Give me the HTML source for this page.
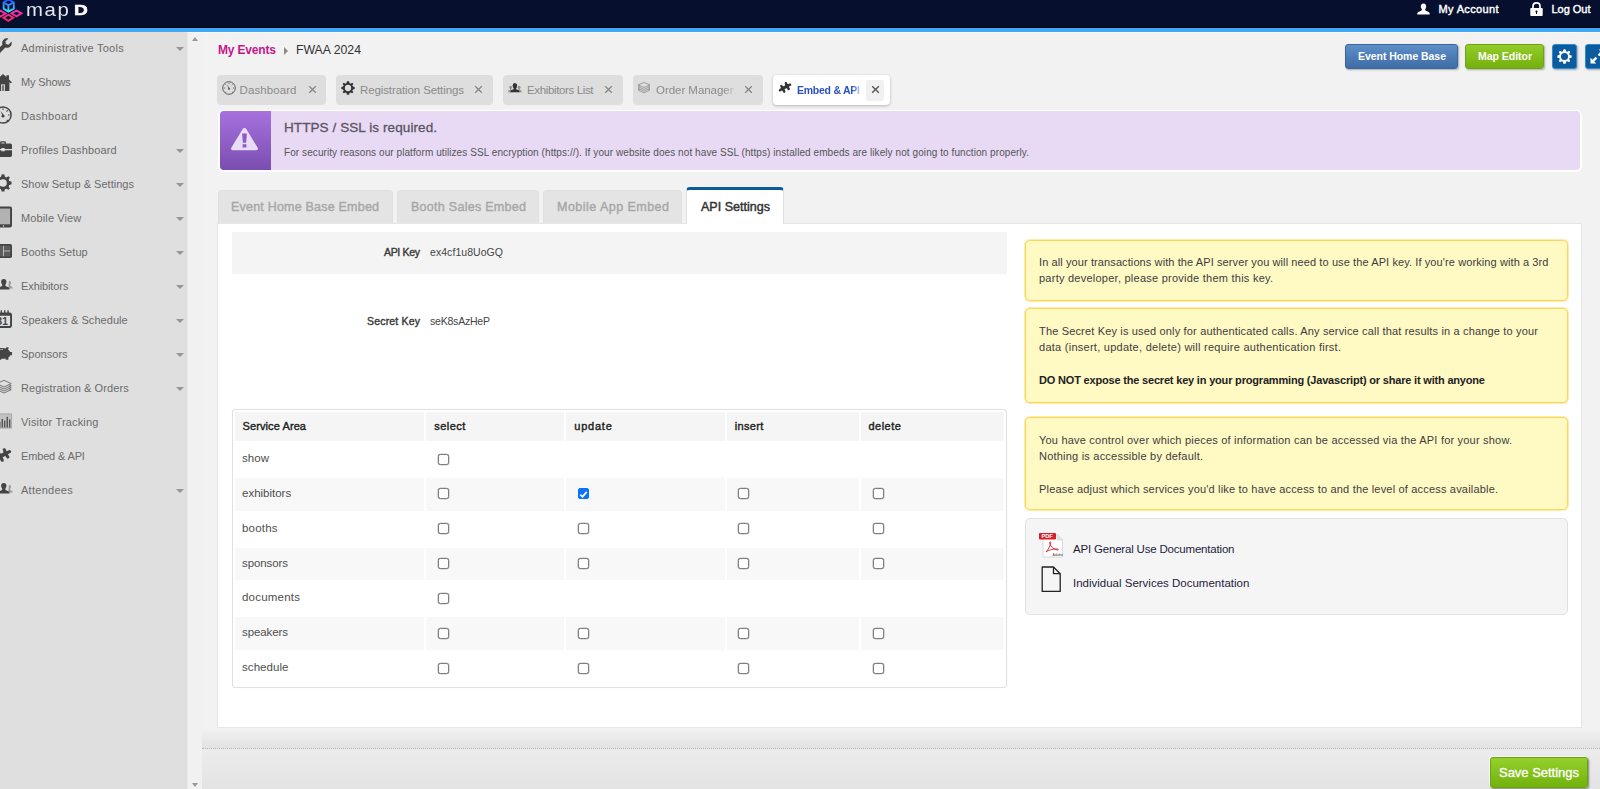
<!DOCTYPE html>
<html lang="en">
<head>
<meta charset="utf-8">
<title>map D - Embed &amp; API</title>
<style>
*{box-sizing:border-box;margin:0;padding:0}
html,body{width:1600px;height:789px;overflow:hidden}
body{position:relative;background:#f2f2f2;font-family:"Liberation Sans",sans-serif;font-size:11.5px;color:#555;-webkit-font-smoothing:antialiased}
.abs{position:absolute}
.t{position:absolute;white-space:nowrap;line-height:1}
/* top bar */
#topbar{position:absolute;left:0;top:0;width:1600px;height:27px;background:#060f2e}
#topline0{position:absolute;left:0;top:27px;width:1600px;height:1px;background:#01030c}
#topline{position:absolute;left:0;top:28px;width:1600px;height:3.7px;background:#3fa9f5}
#topline2{position:absolute;left:0;top:32px;width:1600px;height:1px;background:linear-gradient(90deg,#ecdcd2 187px,#fbfbfb 188px)}
/* sidebar */
#sidebar{position:absolute;left:0;top:33px;width:187px;height:756px;background:#dfdfdf;border-right:1px solid #e9e9e9;box-sizing:content-box}
#sbscroll{position:absolute;left:188px;top:33px;width:15px;height:757px;background:#f1f1f1}
.mi{position:absolute;left:21px;font-size:11px;color:#6b6b6b;white-space:nowrap;line-height:14px}
.arr{position:absolute;left:175.5px;width:0;height:0;border-left:4.7px solid transparent;border-right:4.7px solid transparent;border-top:4.7px solid #969696}
.ico{position:absolute;left:0;overflow:visible}
/* top tabs */
.tab{position:absolute;top:75px;height:30px;background:#dedede;border-radius:4px}
.tab .lbl{position:absolute;top:9px;font-size:11.5px;color:#8a8a8a;white-space:nowrap;line-height:13px}
.tab .x{position:absolute;top:10px;width:9px;height:9px}
.tab.on{background:#fff;box-shadow:0 1px 3px rgba(0,0,0,.25)}
/* sub tabs */
.stab{position:absolute;top:189.6px;height:34.4px;background:#e4e4e4;border-radius:4px 4px 0 0;border:1px solid #e0e0e0;border-bottom:none}
.stab span{position:absolute;top:9px;font-size:12.5px;color:#a7a7a7;white-space:nowrap;line-height:14px;-webkit-text-stroke:.4px #a7a7a7}
/* notes */
.note{position:absolute;left:1025px;width:543px;background:#fff9c4;border:1px solid #fad75c;border-radius:5px;box-shadow:0 0 0 1px rgba(252,222,110,.6);color:#444;font-size:11px}
.note .t{color:#3d3d3d;font-size:11px}
/* table */
.th{position:absolute;top:412px;height:29.4px;background:#f5f5f5}
.th span{position:absolute;left:8px;top:8px;font-size:11px;-webkit-text-stroke:.4px #222;color:#222;line-height:13px;white-space:nowrap}
.row{position:absolute;left:234px;width:769px;height:33px}
.row.alt i{position:absolute;top:0;height:33px;background:#f9f9f9}
.rl{position:absolute;left:242px;font-size:11.5px;color:#4e4e4e;line-height:13px;white-space:nowrap}
.cb{position:absolute;width:11px;height:11px;border:1px solid #7d7d7d;border-radius:2.5px;background:#fff;box-shadow:0 0 0 .3px #8a8a8a}
.cb.on{background:#0b72fa;border-color:#0b72fa;box-shadow:none;border-radius:2px}
</style>
</head>
<body>
<!-- TOP BAR -->
<div id="topbar"></div><div id="topline0"></div><div id="topline"></div><div id="topline2"></div>
<svg class="abs" style="left:0;top:0" width="26" height="26" viewBox="0 0 26 26">
<defs><linearGradient id="gc" gradientUnits="userSpaceOnUse" x1="0" y1="0" x2="0" y2="12"><stop offset="0" stop-color="#2a4ff5"/><stop offset="0.5" stop-color="#35a0f8"/><stop offset="1" stop-color="#35f0e4"/></linearGradient>
<linearGradient id="gp" gradientUnits="userSpaceOnUse" x1="0" y1="10" x2="0" y2="21"><stop offset="0" stop-color="#f530c8"/><stop offset="1" stop-color="#f52a4e"/></linearGradient></defs>
<g fill="none" stroke="url(#gp)" stroke-width="1.9" stroke-linejoin="miter"><path d="M0.3 10.6 5.6 13.6 0.3 16.600001 -5 13.6Z"/><path d="M16.5 10.6 21.5 13.4 16.5 16.400001 11.4 13.4Z"/><path d="M8.4 14.8 13.3 17.7 8.4 20.8 3.500001 17.7Z"/></g>
<g fill="none" stroke="url(#gc)" stroke-width="1.9" stroke-linejoin="round"><path d="M8.4 -0.6 13.8 2.4V8.6L8.4 11.6 3.6 8.6V2.4Z"/><path d="M3.6 2.4 8.4 5.2 13.8 2.4M8.4 5.2V11.6"/></g>
</svg>
<div class="t" style="left:26px;top:0.7px;font-size:18.5px;color:#e4e6ee;letter-spacing:1.5px;transform:scaleX(1.1);transform-origin:0 0">map</div>
<div class="t" style="left:74.3px;top:3.3px;font-size:14.4px;font-weight:bold;color:#fff;-webkit-text-stroke:.5px #fff;transform:scaleX(1.33);transform-origin:0 0">D</div>

<svg class="abs" style="left:1417px;top:3px" width="13" height="12" viewBox="0 0 13 12"><path d="M6.5 0.5C8.4 0.5 9.2 1.9 9.2 3.4 9.2 4.9 8.3 5.7 8.100001 6.6 7.9 7.5 8.9 7.9 10.6 8.5 12.2 9.1 12.8 9.8 12.8 11.6H0.2C0.2 9.8 0.8 9.1 2.4 8.5 4.1 7.9 5.1 7.5 4.9 6.6 4.7 5.7 3.8 4.9 3.8 3.4 3.8 1.9 4.6 0.5 6.5 0.5Z" fill="#fff"/></svg>
<div class="t" style="letter-spacing:0.349px;left:1438.5px;top:3.5px;font-size:11px;color:#fff;-webkit-text-stroke:.4px #fff">My Account</div>
<svg class="abs" style="left:1530px;top:2px" width="13" height="14" viewBox="0 0 13 14"><path d="M3 6.500001V4.2C3 2.2 4.500001 0.9 6.500001 0.9 8.500001 0.9 10 2.2 10 4.2V6.500001" fill="none" stroke="#fff" stroke-width="1.7"/><rect x="0.3" y="6" width="12.4" height="8" rx="0.8" fill="#fff"/><path d="M6.5 8.6A1 1 0 0 1 7 10.5V12H6V10.5A1 1 0 0 1 6.5 8.600001Z" fill="#060f2e"/></svg>
<div class="t" style="letter-spacing:-0.023px;left:1551.5px;top:3.7px;font-size:11px;color:#fff;-webkit-text-stroke:.4px #fff">Log Out</div>

<!-- SIDEBAR -->
<div id="sidebar"></div><div id="sbscroll"></div>
<!--SIDEBAR-ITEMS-->
<svg class="ico" style="left:-6px;top:37.7px" width="18" height="18" viewBox="0 0 16 16"><path d="M15.6 3.2 12.9 5.9 10.6 5.4 10.1 3.1 12.8 0.4C11.3 0 9.6 0.4 8.5 1.5 7.3 2.7 7 4.4 7.5 5.9L0.9 12.5C0.2 13.2 0.2 14.4 0.9 15.1 1.6 15.8 2.8 15.8 3.5 15.1L10.1 8.5C11.6 9 13.3 8.7 14.5 7.5 15.6 6.4 16 4.7 15.6 3.2Z" fill="#444"/></svg>
<div class="mi" style="letter-spacing:0.267px;top:41.4px">Administrative Tools</div>
<div class="arr" style="top:46.6px"></div>
<svg class="ico" style="left:-6px;top:71.7px" width="18" height="18" viewBox="0 0 16 16"><g transform="translate(0 0.8)"><path d="M8 1 0 8.2 1 9.3 2.3 8.2V16H13.7V8.2L15 9.3 16 8.2 13.3 5.8V2H11V3.7Z" fill="#444"/><rect x="6.2" y="10.2" width="3.6" height="5.8" fill="#d8d8d8"/><rect x="7" y="11" width="2" height="5" fill="#777"/></g></svg>
<div class="mi" style="letter-spacing:-0.150px;top:75.4px">My Shows</div>
<svg class="ico" style="left:-6px;top:105.7px" width="18" height="18" viewBox="0 0 16 16"><circle cx="8" cy="8" r="7.2" fill="none" stroke="#444" stroke-width="1.3"/><path d="M8 9.5 5.6 4.2 9.3 8.6Z" fill="#444"/><circle cx="8" cy="9" r="1.3" fill="#444"/><g stroke="#444" stroke-width="1"><path d="M8 2.2V3.6M3.9 3.9 4.9 4.9M12.1 3.9 11.1 4.9M2.2 8H3.6M13.8 8H12.4M11.3 12.5 13 13.5M4.7 12.5 3 13.5"/></g></svg>
<div class="mi" style="letter-spacing:0.334px;top:109.4px">Dashboard</div>
<svg class="ico" style="left:-6px;top:139.7px" width="18" height="18" viewBox="0 0 16 16"><path d="M5.5 3V1.8C5.5 1.3 5.9 1 6.4 1H9.6C10.1 1 10.5 1.3 10.5 1.8V3H14.5C15.3 3 16 3.7 16 4.5V8H9.5V7H6.5V8H0V4.5C0 3.7 0.7 3 1.5 3ZM6.7 3H9.3V2.2H6.7ZM0 9H6.5V10H9.5V9H16V13.5C16 14.3 15.3 15 14.5 15H1.5C0.7 15 0 14.3 0 13.5Z" fill="#444"/></svg>
<div class="mi" style="letter-spacing:0.120px;top:143.4px">Profiles Dashboard</div>
<div class="arr" style="top:148.6px"></div>
<svg class="ico" style="left:-6px;top:173.7px" width="18" height="18" viewBox="0 0 16 16"><path d="M8 0.3 9.2 0.4 9.7 2.4 11 3 12.8 1.9 14.1 3.2 13 5 13.6 6.3 15.6 6.8V9.2L13.6 9.7 13 11 14.1 12.8 12.8 14.1 11 13 9.7 13.6 9.2 15.6H6.8L6.3 13.6 5 13 3.2 14.1 1.9 12.8 3 11 2.4 9.7 0.4 9.2V6.8L2.4 6.3 3 5 1.9 3.2 3.2 1.9 5 3 6.3 2.4 6.8 0.4ZM8 4.6A3.4 3.4 0 1 0 8 11.4 3.4 3.4 0 1 0 8 4.600001Z" fill="#444" fill-rule="evenodd"/></svg>
<div class="mi" style="letter-spacing:0.024px;top:177.4px">Show Setup &amp; Settings</div>
<div class="arr" style="top:182.6px"></div>
<svg class="ico" style="left:-6px;top:207.7px" width="18" height="18" viewBox="0 0 16 16"><rect x="0.9" y="-1.25" width="15.1" height="18.5" rx="1.6" fill="#444"/><rect x="2.6" y="0.5" width="11.7" height="14" fill="#b2b2b2"/><circle cx="8.4" cy="16" r="0.65" fill="#ddd"/></svg>
<div class="mi" style="letter-spacing:0.119px;top:211.4px">Mobile View</div>
<div class="arr" style="top:216.6px"></div>
<svg class="ico" style="left:-6px;top:241.7px" width="18" height="18" viewBox="0 0 16 16"><rect x="0" y="1.8" width="16" height="12.4" rx="1.6" fill="#444"/><rect x="1.5" y="3.3" width="6.3" height="9.4" fill="#5c5c5c"/><rect x="9" y="3.3" width="5.5" height="4.2" fill="#5c5c5c"/><rect x="9" y="8.5" width="5.5" height="4.2" fill="#5c5c5c"/><path d="M8.4 3.3V12.7M8.4 8H14.5" stroke="#cfcfcf" stroke-width="0.8" fill="none"/></svg>
<div class="mi" style="letter-spacing:0.058px;top:245.4px">Booths Setup</div>
<div class="arr" style="top:250.6px"></div>
<svg class="ico" style="left:-6px;top:275.7px" width="18" height="18" viewBox="0 0 16 16"><path transform="translate(0.3 -2)" d="M13 6.3C14.3 6.3 14.8 7.3 14.8 8.2 14.8 9.1 14.2 9.7 14 10.3 13.8 10.9 14.600001 11.2 15.4 11.5 16.1 11.8 16.3 12.3 16.3 13H12.4Z" fill="#9a9a9a"/><path transform="translate(1.9 0.96) scale(0.85 0.82)" d="M8 2C9.9 2 10.8 3.4 10.8 5 10.8 6.6 9.9 7.6 9.6 8.6 9.3 9.7 10.4 10.1 12.3 10.8 13.7 11.3 14 12 14 13.5H2C2 12 2.3 11.3 3.7 10.8 5.6 10.1 6.7 9.7 6.4 8.6 6.1 7.6 5.2 6.6 5.2 5 5.2 3.4 6.1 2 8 2Z" fill="#444"/></svg>
<div class="mi" style="letter-spacing:-0.100px;top:279.4px">Exhibitors</div>
<div class="arr" style="top:284.6px"></div>
<svg class="ico" style="left:-6px;top:309.7px" width="18" height="18" viewBox="0 0 16 16"><path d="M2 2.3H14C15.1 2.3 16 3.2 16 4.3V14C16 15.1 15.1 16 14 16H2C0.9 16 0 15.1 0 14V4.3C0 3.2 0.9 2.3 2 2.3ZM1.7 5.2V13.6C1.7 14 2 14.3 2.4 14.3H13.6C14 14.3 14.3 14 14.3 13.6V5.2Z" fill="#444" fill-rule="evenodd"/><g stroke="#444" stroke-width="1.2"><path d="M3.5 0.3V3M6.5 0.3V3M9.5 0.3V3M12.5 0.3V3"/></g><text x="2.3" y="13.4" font-family="Liberation Sans,sans-serif" font-weight="bold" font-size="9" fill="#444">31</text></svg>
<div class="mi" style="letter-spacing:0.050px;top:313.4px">Speakers &amp; Schedule</div>
<div class="arr" style="top:318.6px"></div>
<svg class="ico" style="left:-6px;top:343.7px" width="18" height="18" viewBox="0 0 16 16"><path d="M1 6.500001C1.8 4.5 4 3.5 7 3.5 8.2 3.5 9.300001 3.7 10.2 4 10.8 3.2 11.8 2.8 13 3L12.600001 4.8C13.4 5.4 14 6.2 14.3 7H16V10H14.5C14.1 10.8 13.5 11.5 12.8 12V14H10.3V12.8C9.3 13 7.8 13.1 6.5 13V14H4V12.3C2 11.3 0.5 9.5 1 6.500001Z" fill="#444"/><path d="M3.6 6C4.6 4.900001 6.4 4.6 8 5" fill="none" stroke="#cfcfcf" stroke-width="0.7"/></svg>
<div class="mi" style="letter-spacing:0.017px;top:347.4px">Sponsors</div>
<div class="arr" style="top:352.6px"></div>
<svg class="ico" style="left:-6px;top:377.7px" width="18" height="18" viewBox="0 0 16 16"><g transform="translate(1.8 1.6) scale(0.885 0.8)" fill="#dfdfdf" stroke="#6e6e6e" stroke-width="1" stroke-linejoin="round"><path d="M8 7.6 15.3 11 8 14.6 0.7 11Z"/><path d="M8 5.4 15.3 8.8 8 12.4 0.7 8.8Z"/><path d="M8 3.2 15.3 6.6 8 10.2 0.7 6.6Z"/><path d="M8 0.6 15.3 4.2 8 8 0.7 4.2Z"/></g></svg>
<div class="mi" style="letter-spacing:0.097px;top:381.4px">Registration &amp; Orders</div>
<div class="arr" style="top:386.6px"></div>
<svg class="ico" style="left:-6px;top:411.7px" width="18" height="18" viewBox="0 0 16 16"><rect x="-1" y="1.7" width="16.7" height="12.6" fill="#c2c2c2" stroke="#a2a2a2" stroke-width="0.7"/><g fill="#444" transform="translate(0 2.4) scale(1 0.76)"><rect x="0.2" y="9" width="1.1" height="6"/><rect x="2.4" y="7" width="1.1" height="8"/><rect x="4.6" y="8.5" width="1.1" height="6.5"/><rect x="6.8" y="5" width="1.1" height="10"/><rect x="9" y="7" width="1.1" height="8"/><rect x="11.2" y="2.5" width="1.1" height="12.5"/><rect x="13.4" y="5.5" width="1.1" height="9.5"/></g></svg>
<div class="mi" style="letter-spacing:0.153px;top:415.4px">Visitor Tracking</div>
<svg class="ico" style="left:-6px;top:445.7px" width="18" height="18" viewBox="0 0 16 16"><g transform="translate(0.4 0.9) scale(1.11)" fill="none" stroke="#444" stroke-linecap="round" stroke-width="2.5"><path d="M4.8 7.4 3.4 5.1M4.8 7.4 2 9.3M4.8 7.4 6.2 10.6M9 5.2 7.9 2.2M9 5.2 12.1 3.7M9 5.2 10.7 8"/><path d="M4.8 7.4 9 5.2" stroke-width="3.2"/></g></svg>
<div class="mi" style="letter-spacing:-0.154px;top:449.4px">Embed &amp; API</div>
<svg class="ico" style="left:-6px;top:479.7px" width="18" height="18" viewBox="0 0 16 16"><path transform="translate(0.3 -2)" d="M13 6.3C14.3 6.3 14.8 7.3 14.8 8.2 14.8 9.1 14.2 9.7 14 10.3 13.8 10.9 14.600001 11.2 15.4 11.5 16.1 11.8 16.3 12.3 16.3 13H12.4Z" fill="#9a9a9a"/><path transform="translate(1.9 0.96) scale(0.85 0.82)" d="M8 2C9.9 2 10.8 3.4 10.8 5 10.8 6.6 9.9 7.6 9.6 8.6 9.3 9.7 10.4 10.1 12.3 10.8 13.7 11.3 14 12 14 13.5H2C2 12 2.3 11.3 3.7 10.8 5.6 10.1 6.7 9.7 6.4 8.6 6.1 7.6 5.2 6.6 5.2 5 5.2 3.4 6.1 2 8 2Z" fill="#444"/></svg>
<div class="mi" style="letter-spacing:0.269px;top:483.4px">Attendees</div>
<div class="arr" style="top:488.6px"></div>
<!--/SIDEBAR-ITEMS-->
<!-- breadcrumb -->
<div class="t" style="letter-spacing:-0.170px;left:218px;top:43.5px;font-size:12px;font-weight:bold;color:#c4168c">My Events</div>
<div class="abs" style="left:284px;top:46.5px;width:0;height:0;border-top:4px solid transparent;border-bottom:4px solid transparent;border-left:4.5px solid #8a8a8a"></div>
<div class="t" style="letter-spacing:-0.021px;left:296px;top:43.5px;font-size:12.3px;color:#333">FWAA 2024</div>

<!-- header buttons -->
<div class="abs" style="left:1345px;top:43.6px;width:113px;height:25px;border-radius:3px;border:1px solid #3a669e;background:linear-gradient(#5d8fc7,#3f6ca6);box-shadow:1px 1px 2px rgba(0,0,0,.3)"><span class="t" style="letter-spacing:-0.050px;left:12px;top:6.5px;font-size:10.5px;font-weight:bold;color:#fff">Event Home Base</span></div>
<div class="abs" style="left:1465px;top:43.6px;width:79px;height:25px;border-radius:3px;border:1px solid #6fa514;background:linear-gradient(#93cc27,#74b00e);box-shadow:1px 1px 2px rgba(0,0,0,.3)"><span class="t" style="letter-spacing:-0.028px;left:12px;top:6.5px;font-size:10.5px;font-weight:bold;color:#fff">Map Editor</span></div>
<div class="abs" style="left:1552px;top:43.6px;width:25px;height:25px;border-radius:3px;background:#0b5c9e;border:1px solid #2f8bd6;box-shadow:1px 1px 2px rgba(0,0,0,.3)">
<svg class="abs" style="left:4px;top:4px" width="15" height="15" viewBox="0 0 16 16"><path d="M8 0.3 9.2 0.4 9.7 2.4 11 3 12.8 1.9 14.1 3.2 13 5 13.6 6.3 15.6 6.8V9.2L13.6 9.7 13 11 14.1 12.8 12.8 14.1 11 13 9.7 13.6 9.2 15.6H6.8L6.3 13.6 5 13 3.2 14.1 1.9 12.8 3 11 2.4 9.7 0.4 9.2V6.8L2.4 6.3 3 5 1.9 3.2 3.2 1.9 5 3 6.3 2.4 6.8 0.4ZM8 4.2A3.8 3.8 0 1 0 8 11.8 3.8 3.8 0 1 0 8 4.200001Z" fill="#fff" fill-rule="evenodd"/></svg></div>
<div class="abs" style="left:1585px;top:43.6px;width:25px;height:25px;border-radius:3px;background:#0b5c9e;border:1px solid #2f8bd6;box-shadow:1px 1px 2px rgba(0,0,0,.3)">
<svg class="abs" style="left:4px;top:4px" width="15" height="15" viewBox="0 0 16 16"><path d="M0.5 15.5V9.3L2.7 11.5 6 8.2 7.8 10 4.5 13.3 6.7 15.5Z" fill="#fff"/><path d="M15.5 0.5V6.7L13.3 4.5 10 7.8 8.2 6 11.5 2.7 9.3 0.5Z" fill="#fff"/></svg></div>

<!-- top tabs -->
<div class="tab" style="left:216.5px;width:109.5px"><svg class="abs" style="left:5px;top:6px" width="14" height="14" viewBox="0 0 16 16"><circle cx="8" cy="8" r="7.2" fill="none" stroke="#555" stroke-width="1.1"/><path d="M8 9.5 5.6 4.2 9.3 8.6Z" fill="#555"/><circle cx="8" cy="9" r="1.1" fill="#555"/><g stroke="#555" stroke-width="0.9"><path d="M8 2.2V3.6M3.9 3.9 4.9 4.9M12.1 3.9 11.1 4.9M2.2 8H3.6M13.8 8H12.400001M11.3 12.5 12.6 13.3M4.7 12.5 3.4 13.3"/></g></svg><span class="lbl" style="letter-spacing:0.092px;left:23px">Dashboard</span><svg class="x" style="left:91px" viewBox="0 0 9 9"><path d="M1.2 1.2 7.8 7.8M7.8 1.2 1.2 7.8" stroke="#858585" stroke-width="1.25"/></svg></div>
<div class="tab" style="left:336px;width:157px"><svg class="abs" style="left:5px;top:6px" width="14" height="14" viewBox="0 0 16 16"><path d="M8 0.3 9.2 0.4 9.7 2.4 11 3 12.8 1.9 14.1 3.2 13 5 13.6 6.3 15.6 6.8V9.2L13.6 9.7 13 11 14.1 12.8 12.8 14.1 11 13 9.7 13.6 9.2 15.6H6.8L6.3 13.6 5 13 3.2 14.1 1.9 12.8 3 11 2.4 9.7 0.4 9.2V6.8L2.4 6.3 3 5 1.9 3.2 3.2 1.9 5 3 6.3 2.4 6.8 0.4ZM8 4.4A3.6 3.6 0 1 0 8 11.6 3.6 3.6 0 1 0 8 4.400001Z" fill="#333" fill-rule="evenodd"/></svg><span class="lbl" style="letter-spacing:-0.106px;left:24px">Registration Settings</span><svg class="x" style="left:138px" viewBox="0 0 9 9"><path d="M1.2 1.2 7.8 7.8M7.8 1.2 1.2 7.8" stroke="#858585" stroke-width="1.25"/></svg></div>
<div class="tab" style="left:503px;width:120px"><svg class="abs" style="left:5.2px;top:8.4px" width="13.8" height="9.4" viewBox="0 0 15 10"><g fill="#929292"><ellipse cx="2.9" cy="4.6" rx="1.5" ry="1.8"/><rect x="2.2" y="5.6" width="1.4" height="2.4"/><path d="M0 10C0 8.2 0.8 7.6 2.9 7.6H5V10Z"/><ellipse cx="12.1" cy="4.6" rx="1.5" ry="1.8"/><rect x="11.4" y="5.6" width="1.4" height="2.4"/><path d="M15 10C15 8.2 14.2 7.6 12.1 7.6H10V10Z"/></g><g fill="#333"><ellipse cx="7.5" cy="2.8" rx="2.5" ry="2.8"/><rect x="6.1" y="4" width="2.8" height="3.4"/><path d="M2.6 10C2.6 7.5 4 6.6 7.5 6.6S12.4 7.5 12.4 10Z"/></g></svg><span class="lbl" style="letter-spacing:-0.364px;left:24px">Exhibitors List</span><svg class="x" style="left:101px" viewBox="0 0 9 9"><path d="M1.2 1.2 7.8 7.8M7.8 1.2 1.2 7.8" stroke="#858585" stroke-width="1.25"/></svg></div>
<div class="tab" style="left:633px;width:130px"><svg class="abs" style="left:4px;top:7px" width="14" height="12" viewBox="0 0 16 14"><g fill="#dedede" stroke="#8a8a8a" stroke-width="0.9" stroke-linejoin="round"><path d="M8 6.4 15 9.4 8 12.6 1 9.4Z"/><path d="M8 4.4 15 7.4 8 10.6 1 7.4Z"/><path d="M8 2.4 15 5.4 8 8.6 1 5.4Z"/><path d="M8 0.6 15 3.4 8 6.4 1 3.4Z"/></g></svg><span class="lbl" style="letter-spacing:-0.040px;left:23px;width:78px;overflow:hidden;-webkit-mask-image:linear-gradient(90deg,#000 88%,rgba(0,0,0,.25));mask-image:linear-gradient(90deg,#000 88%,rgba(0,0,0,.25))">Order Manager</span><svg class="x" style="left:111px" viewBox="0 0 9 9"><path d="M1.2 1.2 7.8 7.8M7.8 1.2 1.2 7.8" stroke="#858585" stroke-width="1.25"/></svg></div>
<div class="tab on" style="left:773px;width:117px"><svg class="abs" style="left:5px;top:6px" width="14" height="14" viewBox="0 0 14 14"><g  fill="none" stroke="#333" stroke-linecap="round" stroke-width="2.5"><path d="M4.8 7.4 3.4 5.1M4.8 7.4 2 9.3M4.8 7.4 6.2 10.6M9 5.2 7.9 2.2M9 5.2 12.1 3.7M9 5.2 10.7 8"/><path d="M4.8 7.4 9 5.2" stroke-width="3.2"/></g></svg><span class="lbl" style="letter-spacing:-0.255px;left:24px;color:#2a52be;font-weight:bold;font-size:10.5px;width:64px;overflow:hidden;-webkit-mask-image:linear-gradient(90deg,#000 86%,rgba(0,0,0,.2));mask-image:linear-gradient(90deg,#000 86%,rgba(0,0,0,.2))">Embed &amp; API</span><div class="abs" style="left:93px;top:5px;width:18px;height:21px;background:#f1f1f1;border-radius:2px"></div><svg class="x" style="left:98px" viewBox="0 0 9 9"><path d="M1.2 1.2 7.8 7.8M7.8 1.2 1.2 7.8" stroke="#555" stroke-width="1.4"/></svg></div>

<!-- alert -->
<div class="abs" style="left:218px;top:110.3px;width:1364px;height:62.2px;background:#fff;border-radius:6px"></div>
<div class="abs" style="left:220px;top:111.4px;width:1360px;height:58.6px;background:#e8d9f5;border-radius:4px"></div>
<div class="abs" style="left:220px;top:111.4px;width:51px;height:58.6px;background:linear-gradient(#a771de,#7a4eb0);border-radius:4px 0 0 4px"></div>
<svg class="abs" style="left:230px;top:127px" width="29" height="24" viewBox="0 0 29 24"><path d="M14.5 1C15.3 1 15.9 1.4 16.3 2.1L27.7 20.8C28.4 22 27.7 23.2 26.400001 23.2H2.6C1.3 23.2 0.6 22 1.3 20.8L12.7 2.1C13.1 1.4 13.7 1 14.5 1Z" fill="#e9dcf6"/><path d="M12.1 6.4H16.9L16.1 15.8H12.9ZM12.6 17.2H16.4V20.6H12.6Z" fill="#8d5cc4"/></svg>
<div class="t" style="letter-spacing:0.084px;left:284px;top:121px;font-size:13.5px;color:#5a5560;font-weight:normal;-webkit-text-stroke:.3px #5a5560">HTTPS / SSL is required.</div>
<div class="t" style="letter-spacing:0.078px;left:284px;top:147.7px;font-size:10px;color:#555">For security reasons our platform utilizes SSL encryption (https://). If your website does not have SSL (https) installed embeds are likely not going to function properly.</div>

<!-- sub tabs -->
<div class="stab" style="left:218px;width:175px"><span style="letter-spacing:0.209px;left:12px">Event Home Base Embed</span></div>
<div class="stab" style="left:397px;width:142px"><span style="letter-spacing:0.281px;left:13px">Booth Sales Embed</span></div>
<div class="stab" style="left:543px;width:139px"><span style="letter-spacing:0.471px;left:13px">Mobile App Embed</span></div>
<div class="abs" style="left:217px;top:223px;width:1365px;height:505px;background:#fff;border:1px solid #e6e6e6"></div>
<div class="abs" style="left:686px;top:186.8px;width:98px;height:37.2px;background:#fff;border:1px solid #e0e0e0;border-top:3px solid #0b5a9d;border-bottom:none;border-radius:4px 4px 0 0"><span class="t" style="letter-spacing:0.018px;left:14px;top:11.2px;font-size:12.5px;color:#333;-webkit-text-stroke:.45px #333">API Settings</span></div>

<!-- key rows -->
<div class="abs" style="left:232px;top:232px;width:775px;height:42px;background:#f4f4f4"></div>
<div class="t" style="letter-spacing:-0.323px;left:384px;top:247px;font-size:10.5px;color:#3a3a3a;-webkit-text-stroke:.4px #3a3a3a">API Key</div>
<div class="t" style="letter-spacing:0.057px;left:430px;top:247px;font-size:10.5px;color:#444">ex4cf1u8UoGQ</div>
<div class="t" style="letter-spacing:0.182px;left:367px;top:316px;font-size:10.5px;color:#3a3a3a;-webkit-text-stroke:.4px #3a3a3a">Secret Key</div>
<div class="t" style="letter-spacing:-0.208px;left:430px;top:316px;font-size:10.5px;color:#444">seK8sAzHeP</div>
<div class="abs" style="left:232px;top:409px;width:775px;height:279px;background:#fff;border:1px solid #e0e0e0;border-radius:3px;box-shadow:0 0 1px rgba(0,0,0,.08)"></div>
<div class="th" style="left:234.5px;width:189.7px"><span style="letter-spacing:0.102px">Service Area</span></div>
<div class="th" style="left:426.3px;width:138px"><span style="letter-spacing:0.450px">select</span></div>
<div class="th" style="left:566.3px;width:158.7px"><span style="letter-spacing:0.769px">update</span></div>
<div class="th" style="left:726.7px;width:132px"><span style="letter-spacing:0.359px">insert</span></div>
<div class="th" style="left:860.5px;width:143.7px"><span style="letter-spacing:0.463px">delete</span></div>
<div class="rl" style="letter-spacing:0.047px;top:451.95px">show</div>
<div class="cb" style="left:438px;top:453.60px"></div>
<div class="abs" style="left:234.5px;top:478.0px;width:189.7px;height:32.75px;background:#f8f8f8"></div>
<div class="abs" style="left:426.3px;top:478.0px;width:138px;height:32.75px;background:#f8f8f8"></div>
<div class="abs" style="left:566.3px;top:478.0px;width:158.7px;height:32.75px;background:#f8f8f8"></div>
<div class="abs" style="left:726.7px;top:478.0px;width:132px;height:32.75px;background:#f8f8f8"></div>
<div class="abs" style="left:860.5px;top:478.0px;width:143.7px;height:32.75px;background:#f8f8f8"></div>
<div class="rl" style="letter-spacing:-0.002px;top:486.83px">exhibitors</div>
<div class="cb" style="left:438px;top:488.47px"></div>
<div class="cb on" style="left:578px;top:488.47px"><svg class="abs" style="left:-1px;top:-0.6px" width="11" height="11" viewBox="0 0 11 11"><path d="M2.3 5.6 4.5 7.8 8.7 2.9" fill="none" stroke="#fff" stroke-width="1.7"/></svg></div>
<div class="cb" style="left:738.3px;top:488.47px"></div>
<div class="cb" style="left:872.5px;top:488.47px"></div>
<div class="rl" style="letter-spacing:0.194px;top:521.71px">booths</div>
<div class="cb" style="left:438px;top:523.34px"></div>
<div class="cb" style="left:578px;top:523.34px"></div>
<div class="cb" style="left:738.3px;top:523.34px"></div>
<div class="cb" style="left:872.5px;top:523.34px"></div>
<div class="abs" style="left:234.5px;top:547.5px;width:189.7px;height:32.75px;background:#f8f8f8"></div>
<div class="abs" style="left:426.3px;top:547.5px;width:138px;height:32.75px;background:#f8f8f8"></div>
<div class="abs" style="left:566.3px;top:547.5px;width:158.7px;height:32.75px;background:#f8f8f8"></div>
<div class="abs" style="left:726.7px;top:547.5px;width:132px;height:32.75px;background:#f8f8f8"></div>
<div class="abs" style="left:860.5px;top:547.5px;width:143.7px;height:32.75px;background:#f8f8f8"></div>
<div class="rl" style="letter-spacing:-0.096px;top:556.59px">sponsors</div>
<div class="cb" style="left:438px;top:558.21px"></div>
<div class="cb" style="left:578px;top:558.21px"></div>
<div class="cb" style="left:738.3px;top:558.21px"></div>
<div class="cb" style="left:872.5px;top:558.21px"></div>
<div class="rl" style="letter-spacing:0.217px;top:591.47px">documents</div>
<div class="cb" style="left:438px;top:593.08px"></div>
<div class="abs" style="left:234.5px;top:617.0px;width:189.7px;height:32.75px;background:#f8f8f8"></div>
<div class="abs" style="left:426.3px;top:617.0px;width:138px;height:32.75px;background:#f8f8f8"></div>
<div class="abs" style="left:566.3px;top:617.0px;width:158.7px;height:32.75px;background:#f8f8f8"></div>
<div class="abs" style="left:726.7px;top:617.0px;width:132px;height:32.75px;background:#f8f8f8"></div>
<div class="abs" style="left:860.5px;top:617.0px;width:143.7px;height:32.75px;background:#f8f8f8"></div>
<div class="rl" style="letter-spacing:-0.096px;top:626.35px">speakers</div>
<div class="cb" style="left:438px;top:627.95px"></div>
<div class="cb" style="left:578px;top:627.95px"></div>
<div class="cb" style="left:738.3px;top:627.95px"></div>
<div class="cb" style="left:872.5px;top:627.95px"></div>
<div class="rl" style="letter-spacing:0.065px;top:661.23px">schedule</div>
<div class="cb" style="left:438px;top:662.82px"></div>
<div class="cb" style="left:578px;top:662.82px"></div>
<div class="cb" style="left:738.3px;top:662.82px"></div>
<div class="cb" style="left:872.5px;top:662.82px"></div>

<div class="note" style="top:240px;height:61px"><div class="t" style="letter-spacing:0.099px;left:13px;top:16px">In all your transactions with the API server you will need to use the API key. If you're working with a 3rd</div><div class="t" style="letter-spacing:0.245px;left:13px;top:32px">party developer, please provide them this key.</div></div>
<div class="note" style="top:308px;height:95px"><div class="t" style="letter-spacing:0.164px;left:13px;top:17px">The Secret Key is used only for authenticated calls. Any service call that results in a change to your</div><div class="t" style="letter-spacing:0.261px;left:13px;top:33px">data (insert, update, delete) will require authentication first.</div><div class="t" style="letter-spacing:-0.185px;left:13px;top:66px;font-weight:bold;color:#222">DO NOT expose the secret key in your programming (Javascript) or share it with anyone</div></div>
<div class="note" style="top:417px;height:93px"><div class="t" style="letter-spacing:0.203px;left:13px;top:17px">You have control over which pieces of information can be accessed via the API for your show.</div><div class="t" style="letter-spacing:0.214px;left:13px;top:33px">Nothing is accessible by default.</div><div class="t" style="letter-spacing:0.183px;left:13px;top:66px">Please adjust which services you'd like to have access to and the level of access available.</div></div>
<div class="abs" style="left:1025px;top:518px;width:543px;height:97px;background:#f5f5f5;border:1px solid #e1e1e1;border-radius:5px"></div>
<!-- pdf icon -->
<svg class="abs" style="left:1038px;top:532px" width="27" height="26" viewBox="0 0 27 26"><path d="M5 2.5H19L24.5 8V25H5Z" fill="#fff" stroke="#d0d0d0" stroke-width="0.8"/><path d="M19 2.5V8H24.5Z" fill="#e4e4e4" stroke="#cfcfcf" stroke-width="0.6"/><rect x="1" y="1" width="17" height="6.5" rx="1" fill="#d5202a"/><text x="3.6" y="6.4" font-family="Liberation Sans,sans-serif" font-weight="bold" font-size="5.6" fill="#fff">PDF</text><path d="M8.5 19.5C10.5 17 12.5 13.5 12.8 10.5 12.9 9.400001 11.600001 9.5 11.7 10.7 12 13.5 14.5 17 19.5 18 20.8 18.2 20.6 16.900001 19.300001 16.900001 15.5 16.8 11 18 8.5 19.5 7.6 20 8 20.3 8.5 19.5Z" fill="none" stroke="#d5202a" stroke-width="0.9"/><text x="14.5" y="23.6" font-family="Liberation Sans,sans-serif" font-size="3.6" fill="#444">Adobe</text></svg>
<div class="t" style="letter-spacing:-0.191px;left:1073px;top:544px;font-size:11.5px;color:#1e1e3c">API General Use Documentation</div>
<!-- file icon -->
<svg class="abs" style="left:1041px;top:566px" width="21" height="27" viewBox="0 0 21 27"><path d="M1.2 1H12.5L19.2 7.7V25.4H1.2Z" fill="#f5f5f5" stroke="#222" stroke-width="1.3" stroke-linejoin="round"/><path d="M12.5 1V7.7H19.2" fill="none" stroke="#222" stroke-width="1.3" stroke-linejoin="round"/></svg>
<div class="t" style="letter-spacing:-0.004px;left:1073px;top:578px;font-size:11.5px;color:#1e1e3c">Individual Services Documentation</div>

<div class="abs" style="left:202px;top:728px;width:1398px;height:20px;background:linear-gradient(#f2f2f2,#e2e2e2)"></div>
<div class="abs" style="left:202px;top:748px;width:1398px;height:41px;background:linear-gradient(#ececec,#e3e3e3);border-top:1px dotted #b8b8b8"></div>
<div class="abs" style="left:1490px;top:757px;width:98px;height:30.5px;border-radius:3px;border:1px solid #6aa511;background:linear-gradient(#95d02c,#72b20c);box-shadow:-1px -1px 0 rgba(255,255,255,.8),1px 1px 2px rgba(0,0,0,.45)"><span class="t" style="letter-spacing:-0.018px;left:8px;top:8px;font-size:13px;color:#fff;-webkit-text-stroke:.3px #fff">Save Settings</span></div>
<!-- scroll arrows -->
<div class="abs" style="left:191.7px;top:37.3px;width:0;height:0;border-left:3.5px solid transparent;border-right:3.5px solid transparent;border-bottom:4px solid #9a9a9a"></div>
<div class="abs" style="left:191.7px;top:783px;width:0;height:0;border-left:3.5px solid transparent;border-right:3.5px solid transparent;border-top:4px solid #9a9a9a"></div>


</body>
</html>
